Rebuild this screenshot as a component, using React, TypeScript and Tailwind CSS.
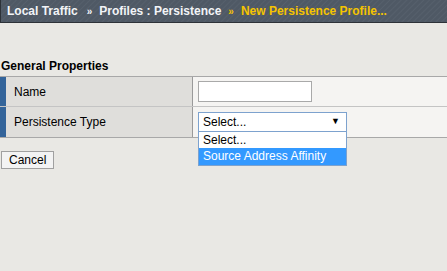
import React from "react";

export default function App() {
  const font = { fontFamily: '"Liberation Sans", Arial, sans-serif' };
  return (
    <div className="w-[447px] h-[271px] bg-[#e9e8e4] overflow-hidden text-[12px] text-black" style={font}>
      <div className="h-[23px] border-l border-b border-[#2d3238] bg-[repeating-linear-gradient(135deg,#4f5965_0px,#4f5965_2px,#56606c_3px,#4f5965_4px)] flex items-baseline pl-[6px] font-bold text-[12px] leading-[22px]">
        <span className="text-[#f2f4f7]">Local Traffic</span>
        <span className="text-[#f2f4f7] text-[10px] ml-[9px] mr-[7px]">»</span>
        <span className="text-[#f2f4f7]">Profiles : Persistence</span>
        <span className="text-[#f5c400] text-[10px] ml-[7px] mr-[7px]">»</span>
        <span className="text-[#f5c400]">New Persistence Profile...</span>
      </div>
      <div className="pt-[36px] pl-[1px] font-bold leading-[14px]">General Properties</div>
      <div className="mt-[3px] border-t border-b border-[#a8a8a8]">
        <div className="flex h-[30px] border-b border-[#c4c4c4]">
          <div className="w-[193px] bg-[#dfdedb] border-l-[6px] border-[#33649a] border-r border-r-[#9a9a9a] flex items-center pl-[8px]">Name</div>
          <div className="flex-1 bg-[#f5f4f2] pl-[5px] pt-[4px]">
            <div className="w-[114px] h-[21px] border border-[#a9a9a9] bg-white"></div>
          </div>
        </div>
        <div className="flex h-[30px]">
          <div className="w-[193px] bg-[#dfdedb] border-l-[6px] border-[#33649a] border-r border-r-[#9a9a9a] flex items-center pl-[8px]">Persistence Type</div>
          <div className="flex-1 bg-[#f5f4f2] pl-[5px] pt-[5px] relative">
            <div className="w-[149px] h-[20px] border border-[#7da2ce] bg-white flex items-center justify-between pl-[4px] pr-[6px]">
              <span>Select...</span>
              <span className="text-[9px]">▼</span>
            </div>
            <div className="absolute left-[5px] top-[24px] w-[149px] border border-[#7da2ce] bg-white z-10">
              <div className="h-[16px] leading-[16px] pl-[4px]">Select...</div>
              <div className="h-[17px] leading-[17px] pl-[4px] bg-[#3399ff] text-white">Source Address Affinity</div>
            </div>
          </div>
        </div>
      </div>
      <div className="pt-[13px] pl-[1px]">
        <button className="h-[18px] px-[7px] border border-[#a0a0a0] bg-[#f3f3f3] text-[12px] leading-[16px] text-black" style={font}>Cancel</button>
      </div>
    </div>
  );
}
